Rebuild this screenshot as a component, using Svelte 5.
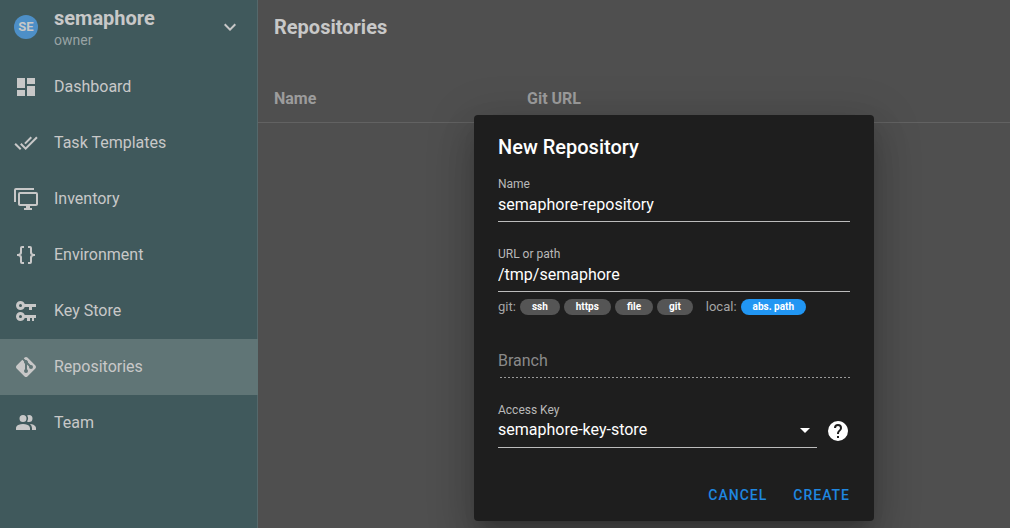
<script>
  const items = [
    { label: 'Dashboard', icon: 'M13,3V9H21V3M13,21H21V11H13M3,21H11V15H3M3,13H11V3H3V13Z' },
    { label: 'Task Templates', icon: 'M0.41,13.41L6,19L7.41,17.58L1.83,12M22.24,5.58L11.66,16.17L7.5,12L6.07,13.41L11.66,19L23.66,7M18,7L16.59,5.58L10.24,11.93L11.66,13.34L18,7Z' },
    { label: 'Inventory', icon: 'M22,17V7H6V17H22M22,5A2,2 0 0,1 24,7V17C24,18.11 23.1,19 22,19H16V21H18V23H10V21H12V19H6C4.89,19 4,18.11 4,17V7A2,2 0 0,1 6,5H22M2,3V15H0V3A2,2 0 0,1 2,1H20V3H2Z' },
    { label: 'Environment', icon: 'M8,3A2,2 0 0,0 6,5V9A2,2 0 0,1 4,11H3V13H4A2,2 0 0,1 6,15V19A2,2 0 0,0 8,21H10V19H8V14A2,2 0 0,0 6,12A2,2 0 0,0 8,10V5H10V3M16,3A2,2 0 0,1 18,5V9A2,2 0 0,0 20,11H21V13H20A2,2 0 0,0 18,15V19A2,2 0 0,1 16,21H14V19H16V14A2,2 0 0,1 18,12A2,2 0 0,1 16,10V5H14V3H16Z' },
    { label: 'Key Store', icon: 'M6.5,2C8.46,2 10.13,3.25 10.74,5H22V8H18V11H15V8H10.74C10.13,9.75 8.46,11 6.5,11C4,11 2,9 2,6.5C2,4 4,2 6.5,2M6.5,5A1.5,1.5 0 0,0 5,6.5A1.5,1.5 0 0,0 6.5,8A1.5,1.5 0 0,0 8,6.5A1.5,1.5 0 0,0 6.5,5M6.5,13C8.46,13 10.13,14.25 10.74,16H22V19H20V22H18V19H16V22H13V19H10.74C10.13,20.75 8.46,22 6.5,22C4,22 2,20 2,17.5C2,15 4,13 6.5,13M6.5,16A1.5,1.5 0 0,0 5,17.5A1.5,1.5 0 0,0 6.5,19A1.5,1.5 0 0,0 8,17.5A1.5,1.5 0 0,0 6.5,16Z' },
    { label: 'Repositories', active: true, icon: 'M2.6,10.59L8.38,4.8L10.07,6.5C9.83,7.35 10.22,8.28 11,8.73V14.27C10.4,14.61 10,15.26 10,16A2,2 0 0,0 12,18A2,2 0 0,0 14,16C14,15.26 13.6,14.61 13,14.27V9.41L15.07,11.5C15,11.65 15,11.82 15,12A2,2 0 0,0 17,14A2,2 0 0,0 19,12A2,2 0 0,0 17,10C16.82,10 16.65,10 16.5,10.07L13.93,7.5C14.19,6.57 13.71,5.55 12.78,5.16C12.35,5 11.9,4.96 11.5,5.07L9.8,3.38L10.59,2.6C11.37,1.81 12.63,1.81 13.41,2.6L21.4,10.59C22.19,11.37 22.19,12.63 21.4,13.41L13.41,21.4C12.63,22.19 11.37,22.19 10.59,21.4L2.6,13.41C1.81,12.63 1.81,11.37 2.6,10.59Z' },
    { label: 'Team', icon: 'M16 17V19H2V17S2 13 9 13 16 17 16 17M12.5 7.5A3.5 3.5 0 1 0 9 11A3.5 3.5 0 0 0 12.5 7.5M15.94 13A5.32 5.32 0 0 1 18 17V19H22V17S22 13.37 15.94 13M15 4A3.39 3.39 0 0 0 13.07 4.59A5 5 0 0 1 13.07 10.41A3.39 3.39 0 0 0 15 11A3.5 3.5 0 0 0 15 4Z' }
  ];
  const schemes = ['ssh', 'https', 'file', 'git'];

  let name = $state('semaphore-repository');
  let url = $state('/tmp/semaphore');
  let branch = $state('');
  let key = $state('semaphore-key-store');
</script>

{#snippet icon(d)}
  <svg viewBox="0 0 24 24" width="24" height="24" fill="currentColor" aria-hidden="true"><path {d} /></svg>
{/snippet}

<div class="app">
  <aside class="sidebar">
    <button class="project" type="button">
      <span class="avatar">SE</span>
      <span class="project-text">
        <span class="project-name">semaphore</span>
        <span class="project-role">owner</span>
      </span>
      {@render icon('M7.41,8.58L12,13.17L16.59,8.58L18,10L12,16L6,10L7.41,8.58Z')}
    </button>
    <nav>
      {#each items as item}
        <a href="#{item.label}" class="nav-item" class:active={item.active}>
          {@render icon(item.icon)}
          <span>{item.label}</span>
        </a>
      {/each}
    </nav>
  </aside>

  <main>
    <h1>Repositories</h1>
    <table>
      <thead>
        <tr><th class="first">Name</th><th>Git URL</th></tr>
      </thead>
    </table>
  </main>

  <form class="dialog" role="dialog" aria-labelledby="dialog-title" onsubmit={(e) => e.preventDefault()}>
    <h2 id="dialog-title">New Repository</h2>

    <div class="field">
      <label for="name">Name</label>
      <input id="name" type="text" bind:value={name} />
    </div>

    <div class="field">
      <label for="url">URL or path</label>
      <input id="url" type="text" bind:value={url} />
      <div class="hints">
        <span>git:</span>
        {#each schemes as scheme}
          <button type="button" class="chip">{scheme}</button>
        {/each}
        <span class="local">local:</span>
        <button type="button" class="chip selected">abs. path</button>
      </div>
    </div>

    <div class="field">
      <input class="dashed" type="text" aria-label="Branch" placeholder="Branch" bind:value={branch} />
    </div>

    <div class="key-row">
      <div class="field">
        <label for="key">Access Key</label>
        <div class="select">
          <select id="key" bind:value={key}>
            <option>semaphore-key-store</option>
          </select>
          {@render icon('M7,10L12,15L17,10H7Z')}
        </div>
      </div>
      <button type="button" class="help" aria-label="Help">
        {@render icon('M15.07,11.25L14.17,12.17C13.45,12.89 13,13.5 13,15H11V14.5C11,13.39 11.45,12.39 12.17,11.67L13.41,10.41C13.78,10.05 14,9.55 14,9A2,2 0 0,0 12,7A2,2 0 0,0 10,9H8A4,4 0 0,1 12,5A4,4 0 0,1 16,9C16,9.88 15.64,10.67 15.07,11.25M13,19H11V17H13M12,2A10,10 0 0,0 2,12A10,10 0 0,0 12,22A10,10 0 0,0 22,12C22,6.47 17.5,2 12,2Z')}
      </button>
    </div>

    <div class="actions">
      <button type="button">CANCEL</button>
      <button type="submit">CREATE</button>
    </div>
  </form>
</div>

<style>
  :global(body) {
    background: #4f4f4f;
  }
  .app {
    position: relative;
    display: flex;
    min-height: 100vh;
    overflow: hidden;
    font: 400 16px/24px Roboto, sans-serif;
    color: #c8c8c8;
  }
  svg {
    display: block;
    flex: none;
  }
  button,
  input,
  select {
    margin: 0;
    padding: 0;
    border: 0;
    border-radius: 0;
    outline: 0;
    background: none;
    color: inherit;
    font: inherit;
    box-sizing: border-box;
  }
  button {
    cursor: pointer;
  }

  .sidebar {
    flex: none;
    width: 258px;
    background: #40595c;
    box-shadow: inset -1px 0 #55686b;
  }
  .project {
    display: flex;
    align-items: center;
    width: 100%;
    height: 59px;
    padding: 0 16px 5px 14px;
    text-align: left;
  }
  .avatar {
    flex: none;
    width: 24px;
    height: 24px;
    margin-right: 16px;
    border-radius: 50%;
    background: #4d8fc7;
    font-size: 13px;
    font-weight: 700;
    line-height: 24px;
    text-align: center;
  }
  .project-text {
    display: flex;
    flex-direction: column;
    flex: 1;
    padding-top: 1px;
  }
  .project-name {
    font-size: 20px;
    font-weight: 700;
  }
  .project-role {
    color: #98a3a4;
    font-size: 14px;
    line-height: 20px;
  }
  .nav-item {
    display: flex;
    align-items: center;
    gap: 16px;
    height: 56px;
    padding: 0 14px;
    color: inherit;
    text-decoration: none;
  }
  .active {
    background: #607576;
  }

  main {
    flex: 1;
    min-width: 0;
  }
  h1 {
    margin: 0;
    padding: 15px 16px 35px;
    font-size: 20px;
    font-weight: 700;
    line-height: 24px;
  }
  table {
    width: 100%;
    border-collapse: collapse;
    table-layout: fixed;
  }
  th {
    height: 48px;
    padding: 2px 16px 0;
    border-bottom: 1px solid #626262;
    color: #9c9c9c;
    font-weight: 700;
    text-align: left;
    box-sizing: border-box;
  }
  .first {
    width: 253px;
  }

  .dialog {
    position: absolute;
    top: 115px;
    left: 474px;
    width: 400px;
    padding: 16px 24px 8px;
    border-radius: 4px;
    background: #1e1e1e;
    color: #fff;
    box-shadow: 0 11px 15px -7px rgba(0, 0, 0, 0.2), 0 24px 38px 3px rgba(0, 0, 0, 0.14), 0 9px 46px 8px rgba(0, 0, 0, 0.12);
    box-sizing: border-box;
  }
  h2 {
    margin: 0 0 13px;
    font-size: 20px;
    font-weight: 500;
    line-height: 32px;
  }
  .field {
    display: flex;
    flex-direction: column;
    flex: 1;
    min-width: 0;
    margin-bottom: 24px;
  }
  label {
    color: #b9b9b9;
    font-size: 12px;
    line-height: 16px;
  }
  input,
  select {
    display: block;
    width: 100%;
    height: 30px;
    padding-bottom: 5px;
    border-bottom: 1px solid #bcbcbc;
  }
  select {
    appearance: none;
  }
  .dashed {
    border-bottom: 0;
    padding-bottom: 6px;
    background: repeating-linear-gradient(90deg, transparent 0 2px, #9a9a9a 2px 4px) bottom / 100% 1px no-repeat;
  }
  .dashed::placeholder {
    color: #8a8a8a;
    opacity: 1;
  }
  .hints {
    display: flex;
    align-items: center;
    gap: 4px;
    height: 16px;
    margin: 7px 0 9px;
    color: #a5a5a5;
    font-size: 13px;
    line-height: 16px;
  }
  .chip {
    height: 16px;
    padding: 0 12px;
    border-radius: 8px;
    background: #555;
    color: #fff;
    font-size: 10px;
    font-weight: 700;
    line-height: 16px;
  }
  .local {
    margin-left: 9px;
  }
  .selected {
    background: #2196f3;
  }
  .key-row {
    display: flex;
    align-items: flex-start;
    gap: 9px;
    margin-bottom: 5px;
  }
  .select {
    position: relative;
  }
  .select svg {
    position: absolute;
    top: 0;
    right: 0;
    pointer-events: none;
  }
  .help {
    padding-top: 17px;
  }
  .actions {
    display: flex;
    justify-content: flex-end;
    gap: 26px;
  }
  .actions button {
    height: 36px;
    color: #1f87e0;
    font-size: 14px;
    font-weight: 500;
    letter-spacing: 1px;
  }
</style>
